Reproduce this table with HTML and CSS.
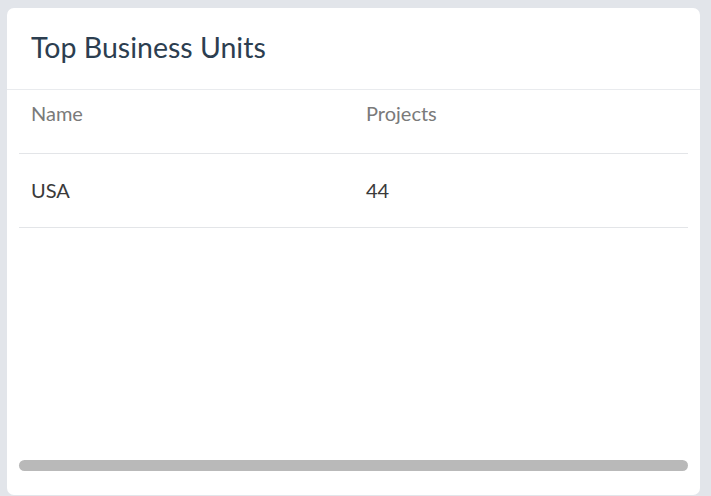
FILE: index.html
```html
<!DOCTYPE html>
<html>
<head>
<meta charset="utf-8">
<link rel="stylesheet" href="styles.css">
</head>
<body>
<div class="card">
  <div class="card-header">
    <h2 class="card-title">Top Business Units</h2>
  </div>
  <div class="card-body">
    <table class="units">
      <thead>
        <tr><th class="col-name">Name</th><th>Projects</th></tr>
      </thead>
      <tbody>
        <tr><td>USA</td><td>44</td></tr>
      </tbody>
    </table>
    <div class="spacer"></div>
    <div class="scrollbar"><div class="thumb"></div></div>
  </div>
</div>
</body>
</html>
```
FILE: styles.css
```css
html, body {
  margin: 0;
  height: 100%;
}
body {
  background: #e2e5ea;
  font-family: Lato, "Open Sans", sans-serif;
  padding: 8px 11px 0 7px;
  box-sizing: border-box;
  overflow: hidden;
}
.card {
  background: #fff;
  border-radius: 7px;
  height: 487px;
  display: flex;
  flex-direction: column;
}
.card-header {
  height: 82px;
  box-sizing: border-box;
  border-bottom: 1px solid #e9ebee;
  display: flex;
  align-items: center;
  padding: 0 24px 4px;
}
.card-title {
  margin: 0;
  font-weight: 400;
  font-size: 28.5px;
  color: #2c3e50;
  line-height: 34px;
}
.card-body {
  flex: 1;
  padding: 0 12px 24px;
  display: flex;
  flex-direction: column;
}
.units {
  width: 100%;
  border-collapse: collapse;
}
.units th, .units td {
  text-align: left;
  font-size: 20px;
  line-height: 24px;
  padding: 12px 12px;
}
.units th {
  font-weight: 400;
  color: #7a7a7a;
  padding-top: 11px;
  padding-bottom: 28px;
  border-bottom: 1px solid #e3e5e8;
}
.units .col-name { width: 311px; }
.units td {
  color: #3a3a3a;
  padding-top: 24px;
  padding-bottom: 25px;
  border-bottom: 1px solid #e3e5e8;
}
.spacer { flex: 1; }
.scrollbar {
  height: 11px;
}
.thumb {
  height: 11px;
  background: #b9b9b9;
  border-radius: 6px;
}
```
